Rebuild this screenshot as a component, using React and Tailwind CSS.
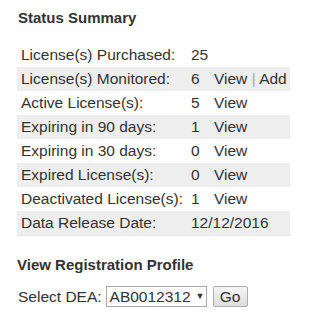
import React from "react";

const rows = [
  { label: "License(s) Purchased:", value: "25", links: [] },
  { label: "License(s) Monitored:", value: "6", links: ["View", "Add"] },
  { label: "Active License(s):", value: "5", links: ["View"] },
  { label: "Expiring in 90 days:", value: "1", links: ["View"] },
  { label: "Expiring in 30 days:", value: "0", links: ["View"] },
  { label: "Expired License(s):", value: "0", links: ["View"] },
  { label: "Deactivated License(s):", value: "1", links: ["View"] },
  { label: "Data Release Date:", value: "12/12/2016", links: [] },
];

export default function App() {
  return (
    <div className="w-[335px] h-[319px] bg-white text-[#333] font-['Liberation_Sans',Arial,sans-serif] px-[17px] pt-[9px]">
      <h2 className="text-[15px] font-bold leading-[18px] pl-[1px]">Status Summary</h2>

      <div className="mt-[16px] w-[273px] border-b border-[#e4e4e4]">
        {rows.map((r, i) => (
          <div
            key={r.label}
            className={`flex items-center h-[24px] text-[15.5px] ${i % 2 === 1 ? "bg-[#eeeeee]" : "bg-white"}`}
          >
            <span className="w-[174px] pl-[4px] whitespace-nowrap">{r.label}</span>
            <span className="w-[23px] whitespace-nowrap">{r.value}</span>
            {r.links.length > 0 && (
              <span className="whitespace-nowrap">
                {r.links.map((l, j) => (
                  <React.Fragment key={l}>
                    {j > 0 && <span className="text-[#c8a36a]"> | </span>}
                    <a className="cursor-pointer">{l}</a>
                  </React.Fragment>
                ))}
              </span>
            )}
          </div>
        ))}
      </div>

      <h2 className="mt-[20px] text-[15px] font-bold leading-[18px]">View Registration Profile</h2>

      <div className="mt-[11px] flex items-center text-[15.5px] pl-[1px]">
        <span>Select DEA:</span>
        <div className="ml-[4px] w-[101px] h-[21px] border border-[#a9a9a9] flex items-center pl-[3px] bg-white">
          <span>AB0012312</span>
          <span className="ml-[5px] text-[9px]">▼</span>
        </div>
        <button className="ml-[6px] w-[35px] h-[21px] border border-[#adadad] rounded-[2px] bg-gradient-to-b from-[#f6f6f6] to-[#dddddd] text-[15.5px] leading-none">
          Go
        </button>
      </div>
    </div>
  );
}
